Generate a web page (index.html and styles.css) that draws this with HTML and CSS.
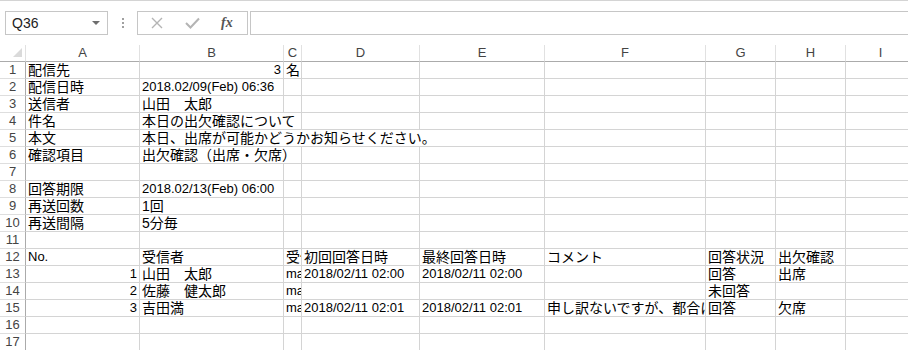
FILE: index.html
```html
<!DOCTYPE html>
<html lang="ja">
<head>
    <meta charset="UTF-8">
    <title>回答一覧</title>
    <link rel="stylesheet" href="styles.css">
</head>
<body>
    <!-- Name box and formula bar -->
    <div class="formula-bar">
        <div class="name-box">
            <span>Q36</span>
            <svg class="arrow" width="8" height="4" viewBox="0 0 8 4"><polygon points="0,0 8,0 4,4" fill="#6e6e6e"/></svg>
        </div>
        <div class="dots"><i></i><i></i><i></i></div>
        <div class="fx-box">
            <svg width="12" height="12" viewBox="0 0 12 12"><path d="M1 1 L11 11 M11 1 L1 11" stroke="#b4b4b4" stroke-width="1.4" fill="none"/></svg>
            <svg width="15" height="12" viewBox="0 0 15 12"><path d="M1 6 L5.5 10.5 L14 1.5" stroke="#b4b4b4" stroke-width="2" fill="none"/></svg>
            <span class="fx">fx</span>
        </div>
        <div class="formula-input"></div>
    </div>

    <!-- Sheet -->
    <div class="sheet">
        <div class="row head">
            <div class="corner"><svg width="9" height="9" viewBox="0 0 9 9"><polygon points="9,0 9,9 0,9" fill="#dadada"/></svg></div>
            <div>A</div><div>B</div><div>C</div><div>D</div><div>E</div><div>F</div><div>G</div><div>H</div><div>I</div>
        </div>

        <div class="row"><div class="rh">1</div><div>配信先</div><div class="r">3</div><div>名</div><div></div><div></div><div></div><div></div><div></div><div></div></div>
        <div class="row"><div class="rh">2</div><div>配信日時</div><div class="n">2018.02/09(Feb) 06:36</div><div></div><div></div><div></div><div></div><div></div><div></div><div></div></div>
        <div class="row"><div class="rh">3</div><div>送信者</div><div>山田　太郎</div><div></div><div></div><div></div><div></div><div></div><div></div><div></div></div>
        <div class="row"><div class="rh">4</div><div>件名</div><div class="span2">本日の出欠確認について</div><div></div><div></div><div></div><div></div><div></div><div></div></div>
        <div class="row"><div class="rh">5</div><div>本文</div><div class="span4">本日、出席が可能かどうかお知らせください。</div><div></div><div></div><div></div><div></div></div>
        <div class="row"><div class="rh">6</div><div>確認項目</div><div class="span2">出欠確認（出席・欠席）</div><div></div><div></div><div></div><div></div><div></div><div></div></div>
        <div class="row"><div class="rh">7</div><div></div><div></div><div></div><div></div><div></div><div></div><div></div><div></div><div></div></div>
        <div class="row"><div class="rh">8</div><div>回答期限</div><div class="n">2018.02/13(Feb) 06:00</div><div></div><div></div><div></div><div></div><div></div><div></div><div></div></div>
        <div class="row"><div class="rh">9</div><div>再送回数</div><div>1回</div><div></div><div></div><div></div><div></div><div></div><div></div><div></div></div>
        <div class="row"><div class="rh">10</div><div>再送間隔</div><div>5分毎</div><div></div><div></div><div></div><div></div><div></div><div></div><div></div></div>
        <div class="row"><div class="rh">11</div><div></div><div></div><div></div><div></div><div></div><div></div><div></div><div></div><div></div></div>
        <div class="row"><div class="rh">12</div><div class="n">No.</div><div>受信者</div><div>受信者メールアドレス</div><div>初回回答日時</div><div>最終回答日時</div><div>コメント</div><div>回答状況</div><div>出欠確認</div><div></div></div>
        <div class="row"><div class="rh">13</div><div class="r">1</div><div>山田　太郎</div><div class="n">mail1@example.com</div><div class="n">2018/02/11 02:00</div><div class="n">2018/02/11 02:00</div><div></div><div>回答</div><div>出席</div><div></div></div>
        <div class="row"><div class="rh">14</div><div class="r">2</div><div>佐藤　健太郎</div><div class="n">mail2@example.com</div><div></div><div></div><div></div><div>未回答</div><div></div><div></div></div>
        <div class="row"><div class="rh">15</div><div class="r">3</div><div>吉田満</div><div class="n">mail3@example.com</div><div class="n">2018/02/11 02:01</div><div class="n">2018/02/11 02:01</div><div>申し訳ないですが、都合により欠席します。</div><div>回答</div><div>欠席</div><div></div></div>
        <div class="row"><div class="rh">16</div><div></div><div></div><div></div><div></div><div></div><div></div><div></div><div></div><div></div></div>
        <div class="row"><div class="rh">17</div><div></div><div></div><div></div><div></div><div></div><div></div><div></div><div></div><div></div></div>
    </div>
</body>
</html>
```

FILE: styles.css
```css
/* Spreadsheet look */
body {
    margin: 0;
    background: #fff;
    font-family: "Liberation Sans", "Noto Sans CJK JP", sans-serif;
    color: #000;
    overflow: hidden;
    border-top: 1px solid #d4d4d4;
}

/* Name box + formula bar */
.formula-bar {
    display: flex;
    padding: 10px 0 10px 5px;
    height: 24px;
}
.name-box {
    width: 103px;
    box-sizing: border-box;
    border: 1px solid #c6c6c6;
    display: flex;
    align-items: center;
    justify-content: space-between;
    padding: 0 7px 0 6px;
    font-size: 14px;
    color: #222;
}
.dots {
    width: 29px;
    display: flex;
    flex-direction: column;
    align-items: center;
    justify-content: center;
    gap: 2px;
}
.dots i {
    width: 2px;
    height: 2px;
    background: #a0a0a0;
}
.fx-box {
    width: 111px;
    box-sizing: border-box;
    border: 1px solid #c6c6c6;
    display: flex;
    align-items: center;
    padding-left: 13px;
    gap: 22px;
}
.fx {
    font-family: "Liberation Serif", serif;
    font-style: italic;
    font-weight: bold;
    font-size: 14px;
    color: #555;
    margin-left: -1px;
}
.formula-input {
    flex: 1;
    margin-left: 2px;
    border: 1px solid #c6c6c6;
    border-right: none;
}

/* Grid */
.sheet {
    width: 916px;
}
.row {
    display: grid;
    grid-template-columns: 26px 114px 144px 18px 118px 125px 161px 70px 70px 70px;
    height: 17px;
}
.row > div {
    box-sizing: border-box;
    border-right: 1px solid #d4d4d4;
    border-bottom: 1px solid #d4d4d4;
    padding: 0 2px;
    font-size: 14px;
    line-height: 16px;
    white-space: nowrap;
    overflow: hidden;
}
.row > .n {
    font-size: 13px;
}
.row > .r {
    font-size: 13px;
    text-align: right;
}
.row > .span2 {
    grid-column: span 2;
}
.row > .span4 {
    grid-column: span 4;
}
.row > .rh {
    border-right-color: #ababab;
    border-bottom-color: #dedede;
    text-align: center;
    font-size: 13px;
    color: #444;
    padding: 0;
}

/* Column letters */
.row.head > div {
    border-right-color: #e1e1e1;
    border-bottom-color: #ababab;
    text-align: center;
    font-size: 13px;
    color: #444;
}
.row.head > .corner {
    display: flex;
    justify-content: flex-end;
    align-items: flex-end;
    padding: 0 3px 4px 0;
}
```
